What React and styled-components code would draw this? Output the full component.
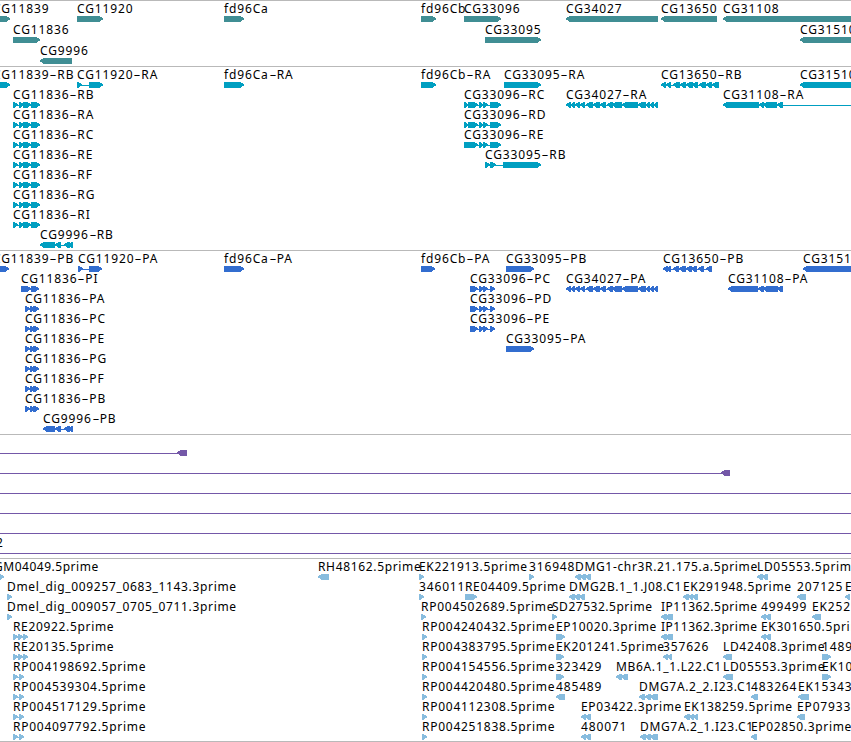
import React from 'react';
import styled, { createGlobalStyle } from 'styled-components';

const GlobalStyle = createGlobalStyle`
  body {
    margin: 0;
    background: #fff;
    overflow: hidden;
  }
`;

const Browser = styled.div`
  display: flex;
  flex-direction: column;
  width: 851px;
  height: 742px;
  overflow: hidden;
  background: #fff;
  font-family: 'Noto Sans', 'DejaVu Sans', sans-serif;
  font-size: 12px;
  color: #000;
`;

const TrackStyles = styled.section`
  border-top: 1px solid #b9b9b9;
  padding-bottom: ${({ $gap }) => $gap}px;
  color: ${({ $color }) => $color};
  &:last-child {
    border-bottom: 1px solid #b9b9b9;
  }
`;

const LaneStyles = styled.div`
  position: relative;
  height: ${({ $height }) => $height}px;
`;

// Features sit on the lane at their genomic position
const FeatureStyles = styled.div`
  position: absolute;
  top: 0;
  left: ${({ $x }) => $x}px;
`;

const Label = styled.span`
  display: block;
  height: 15px;
  line-height: 15px;
  letter-spacing: ${({ $spacing }) => $spacing}px;
  white-space: pre;
  color: #000;
`;

const Hyphen = styled.span`
  display: inline-block;
  width: 4px;
  margin: 0 2px;
  letter-spacing: 0;
  transform: scaleX(1.8);
`;

const Glyph = styled.svg`
  display: block;
  height: 6px;
  fill: currentColor;
  shape-rendering: crispEdges;
`;

const fwd = (label, ...exons) => ({ label, exons, dir: 1 });
const rev = (label, ...exons) => ({ label, exons, dir: -1 });

const genes = [
  [
    fwd('CG11839', [-7, 10]),
    fwd('CG11920', [77, 103]),
    fwd('fd96Ca', [224, 244]),
    fwd('fd96Cb', [421, 436]),
    fwd('CG33096', [464, 501]),
    rev('CG34027', [566, 658]),
    rev('CG13650', [661, 717]),
    rev('CG31108', [723, 860]),
  ],
  [
    fwd('CG11836', [13, 40]),
    fwd('CG33095', [485, 541]),
    rev('CG31510', [800, 870]),
  ],
  [rev('CG9996', [40, 72])],
];

const cg11836 = [[13, 18], [19, 24], [23, 31], [31, 36], [33, 40]];
const cg33096 = [[464, 468], [468, 478], [479, 483], [483, 488], [490, 501]];
const cg34027 = [
  [566, 571], [571, 575], [575, 580], [580, 585], [586, 593], [593, 600],
  [600, 606], [607, 613], [612, 622], [622, 638], [638, 646], [646, 650],
  [650, 654], [654, 658],
];

const transcripts = [
  [
    fwd('CG11839-RB', [-7, 10]),
    fwd('CG11920-RA', [77, 82], [89, 103]),
    fwd('fd96Ca-RA', [224, 244]),
    fwd('fd96Cb-RA', [421, 436]),
    fwd('CG33095-RA', [504, 541]),
    rev('CG13650-RB', [661, 666], [666, 671], [673, 680], [680, 686], [686, 693], [692, 698], [699, 706], [706, 712], [712, 719]),
    rev('CG31510-RA', [800, 870]),
  ],
  [
    fwd('CG11836-RB', ...cg11836),
    fwd('CG33096-RC', ...cg33096),
    rev('CG34027-RA', ...cg34027),
    rev('CG31108-RA', [723, 759], [759, 764], [763, 777], [777, 783], [870, 875]),
  ],
  [fwd('CG11836-RA', ...cg11836), fwd('CG33096-RD', ...cg33096)],
  [fwd('CG11836-RC', ...cg11836), fwd('CG33096-RE', [464, 478], ...cg33096.slice(2))],
  [fwd('CG11836-RE', ...cg11836), fwd('CG33095-RB', [485, 490], [490, 496], [503, 541])],
  [fwd('CG11836-RF', ...cg11836)],
  [fwd('CG11836-RG', ...cg11836)],
  [fwd('CG11836-RI', ...cg11836)],
  [rev('CG9996-RB', [40, 55], [55, 61], [64, 70], [68, 73])],
];

const cg11836p = [[25, 30], [30, 35], [33, 39]];
const cg33096p = [[470, 478], [479, 484], [483, 488], [490, 495]];

const proteins = [
  [
    fwd('CG11839-PB', [-7, 9]),
    fwd('CG11920-PA', [78, 83], [89, 102]),
    fwd('fd96Ca-PA', [224, 244]),
    fwd('fd96Cb-PA', [421, 435]),
    fwd('CG33095-PB', [506, 534]),
    rev('CG13650-PB', [663, 668], [667, 671], [673, 679], [679, 686], [686, 692], [691, 697], [698, 704], [706, 712]),
    rev('CG31510-PA', [803, 870]),
  ],
  [
    fwd('CG11836-PI', [21, 31], [31, 36], [33, 39]),
    fwd('CG33096-PC', ...cg33096p),
    rev('CG34027-PA', ...cg34027),
    rev('CG31108-PA', [728, 758], [758, 764], [763, 778], [777, 783]),
  ],
  [fwd('CG11836-PA', ...cg11836p), fwd('CG33096-PD', ...cg33096p)],
  [fwd('CG11836-PC', ...cg11836p), fwd('CG33096-PE', ...cg33096p)],
  [fwd('CG11836-PE', ...cg11836p), fwd('CG33095-PA', [506, 534])],
  [fwd('CG11836-PG', ...cg11836p)],
  [fwd('CG11836-PF', ...cg11836p)],
  [fwd('CG11836-PB', ...cg11836p)],
  [rev('CG9996-PB', [43, 55], [55, 61], [64, 70], [68, 73])],
];

const alignments = [
  [rev('', [-20, -15], [177, 187])],
  [rev('', [-20, -15], [721, 730])],
  [rev('', [-20, -15], [870, 880])],
  [rev('', [-20, -15], [870, 880])],
  [rev('', [-20, -15], [870, 880])],
  [rev('2', [-4, -3], [870, 880])],
];

const ests = [
  [
    fwd('GM04049.5prime', [-6, 4]),
    rev('RH48162.5prime', [318, 329]),
    fwd('EK221913.5prime', [419, 424]),
    fwd('316948', [529, 534]),
    rev('DMG1-chr3R.21.175.a.5prime', [575, 581], [580, 586], [585, 591]),
    rev('LD05553.5prime', [757, 763], [762, 768]),
  ],
  [
    fwd('Dmel_dig_009257_0683_1143.3prime', [7, 12]),
    fwd('346011', [419, 424]),
    fwd('RE04409.5prime', [465, 471], [468, 477]),
    rev('DMG2B.1_1.J08.C1', [569, 575], [574, 580], [579, 585]),
    rev('EK291948.5prime', [683, 689], [688, 693], [692, 698]),
    rev('207125', [797, 806]),
    rev('EK', [845, 850]),
  ],
  [
    fwd('Dmel_dig_009057_0705_0711.3prime', [7, 12]),
    fwd('RP004502689.5prime', [421, 426]),
    fwd('SD27532.5prime', [552, 557]),
    rev('IP11362.5prime', [661, 667], [665, 673]),
    rev('499499', [761, 766], [765, 771]),
    rev('EK252', [812, 821]),
  ],
  [
    fwd('RE20922.5prime', [13, 18], [18, 23], [23, 28]),
    fwd('RP004240432.5prime', [422, 427]),
    fwd('EP10020.3prime', [556, 565]),
    rev('IP11362.3prime', [661, 667], [665, 673]),
    rev('EK301650.5prime', [761, 766], [765, 771]),
  ],
  [
    fwd('RE20135.5prime', [13, 18], [18, 23], [23, 28]),
    fwd('RP004383795.5prime', [422, 427]),
    fwd('EK201241.5prime', [556, 564]),
    rev('357626', [663, 668], [667, 672]),
    rev('LD42408.3prime', [723, 732]),
    fwd('1489', [822, 831]),
  ],
  [
    fwd('RP004198692.5prime', [13, 18], [19, 24]),
    fwd('RP004154556.5prime', [422, 427]),
    fwd('323429', [556, 564]),
    rev('MB6A.1_1.L22.C1', [616, 622], [621, 628]),
    rev('LD05553.3prime', [723, 733]),
    fwd('EK10', [822, 831]),
  ],
  [
    fwd('RP004539304.5prime', [13, 18], [19, 24]),
    fwd('RP004420480.5prime', [422, 427]),
    rev('485489', [556, 565]),
    rev('DMG7A.2_2.I23.C1', [639, 645], [645, 651], [650, 658]),
    rev('483264', [751, 758]),
    rev('EK15343', [798, 809]),
  ],
  [
    fwd('RP004517129.5prime', [13, 18], [19, 24]),
    fwd('RP004112308.5prime', [422, 427]),
    rev('EP03422.3prime', [581, 586], [585, 591]),
    rev('EK138259.5prime', [684, 690], [689, 694], [693, 698]),
    rev('EP07933', [797, 805]),
  ],
  [
    fwd('RP004097792.5prime', [13, 18], [19, 24]),
    fwd('RP004251838.5prime', [422, 427]),
    rev('480071', [581, 586], [585, 591]),
    rev('DMG7A.2_1.I23.C1', [640, 646], [645, 651], [650, 658]),
    rev('EP02850.3prime', [751, 757]),
  ],
];

const exonPath = (start, end, dir) => {
  const head = Math.min(5, end - start);
  if (dir > 0) {
    const neck = end - head;
    return `M${start} 0H${neck + 1}L${end} 2.4V3.6L${neck + 1} 6H${start}Z`;
  }
  const neck = start + head;
  return `M${end} 0H${neck - 1}L${start} 2.4V3.6L${neck - 1} 6H${end}Z`;
};

const labelSpacing = (label) => {
  if (/^(IP|GM|SD)/.test(label)) return 0.52;
  if (/^RP/.test(label)) return 0.74;
  if (/prime|_/.test(label)) return 0.66;
  return 0.85;
};

const Feature = ({ label, exons, dir }) => {
  const x = exons[0][0];
  const width = exons[exons.length - 1][1] - x;
  // only the isoform suffix takes the long hyphen
  const [, name, suffix] = label.match(/^(.*)-([RP][A-I])$/) || [null, label];
  return (
    <FeatureStyles $x={x}>
      <Label $spacing={labelSpacing(label)}>
        {name}
        {suffix && <Hyphen>-</Hyphen>}
        {suffix}
      </Label>
      <Glyph width={width} height="6" viewBox={`0 0 ${width} 6`}>
        {exons.length > 1 && <rect x="1" y="3" width={width - 2} height="1" />}
        {exons.map(([start, end]) => (
          <path key={start} d={exonPath(start - x, end - x, dir)} />
        ))}
      </Glyph>
    </FeatureStyles>
  );
};

const Track = ({ lanes, color, laneHeight = 20, gap = 3 }) => (
  <TrackStyles $color={color} $gap={gap}>
    {lanes.map((features, i) => (
      <LaneStyles key={i} $height={laneHeight}>
        {features.map((feature) => (
          <Feature key={feature.label + feature.exons[0][0]} {...feature} />
        ))}
      </LaneStyles>
    ))}
  </TrackStyles>
);

const App = () => (
  <>
    <GlobalStyle />
    <Browser>
      <Track lanes={genes} color="#408e94" laneHeight={21} gap={2} />
      <Track lanes={transcripts} color="#009fc1" />
      <Track lanes={proteins} color="#326dcf" />
      <Track lanes={alignments} color="#7458a8" />
      <Track lanes={ests} color="#87bcde" gap={2} />
    </Browser>
  </>
);

export default App;
